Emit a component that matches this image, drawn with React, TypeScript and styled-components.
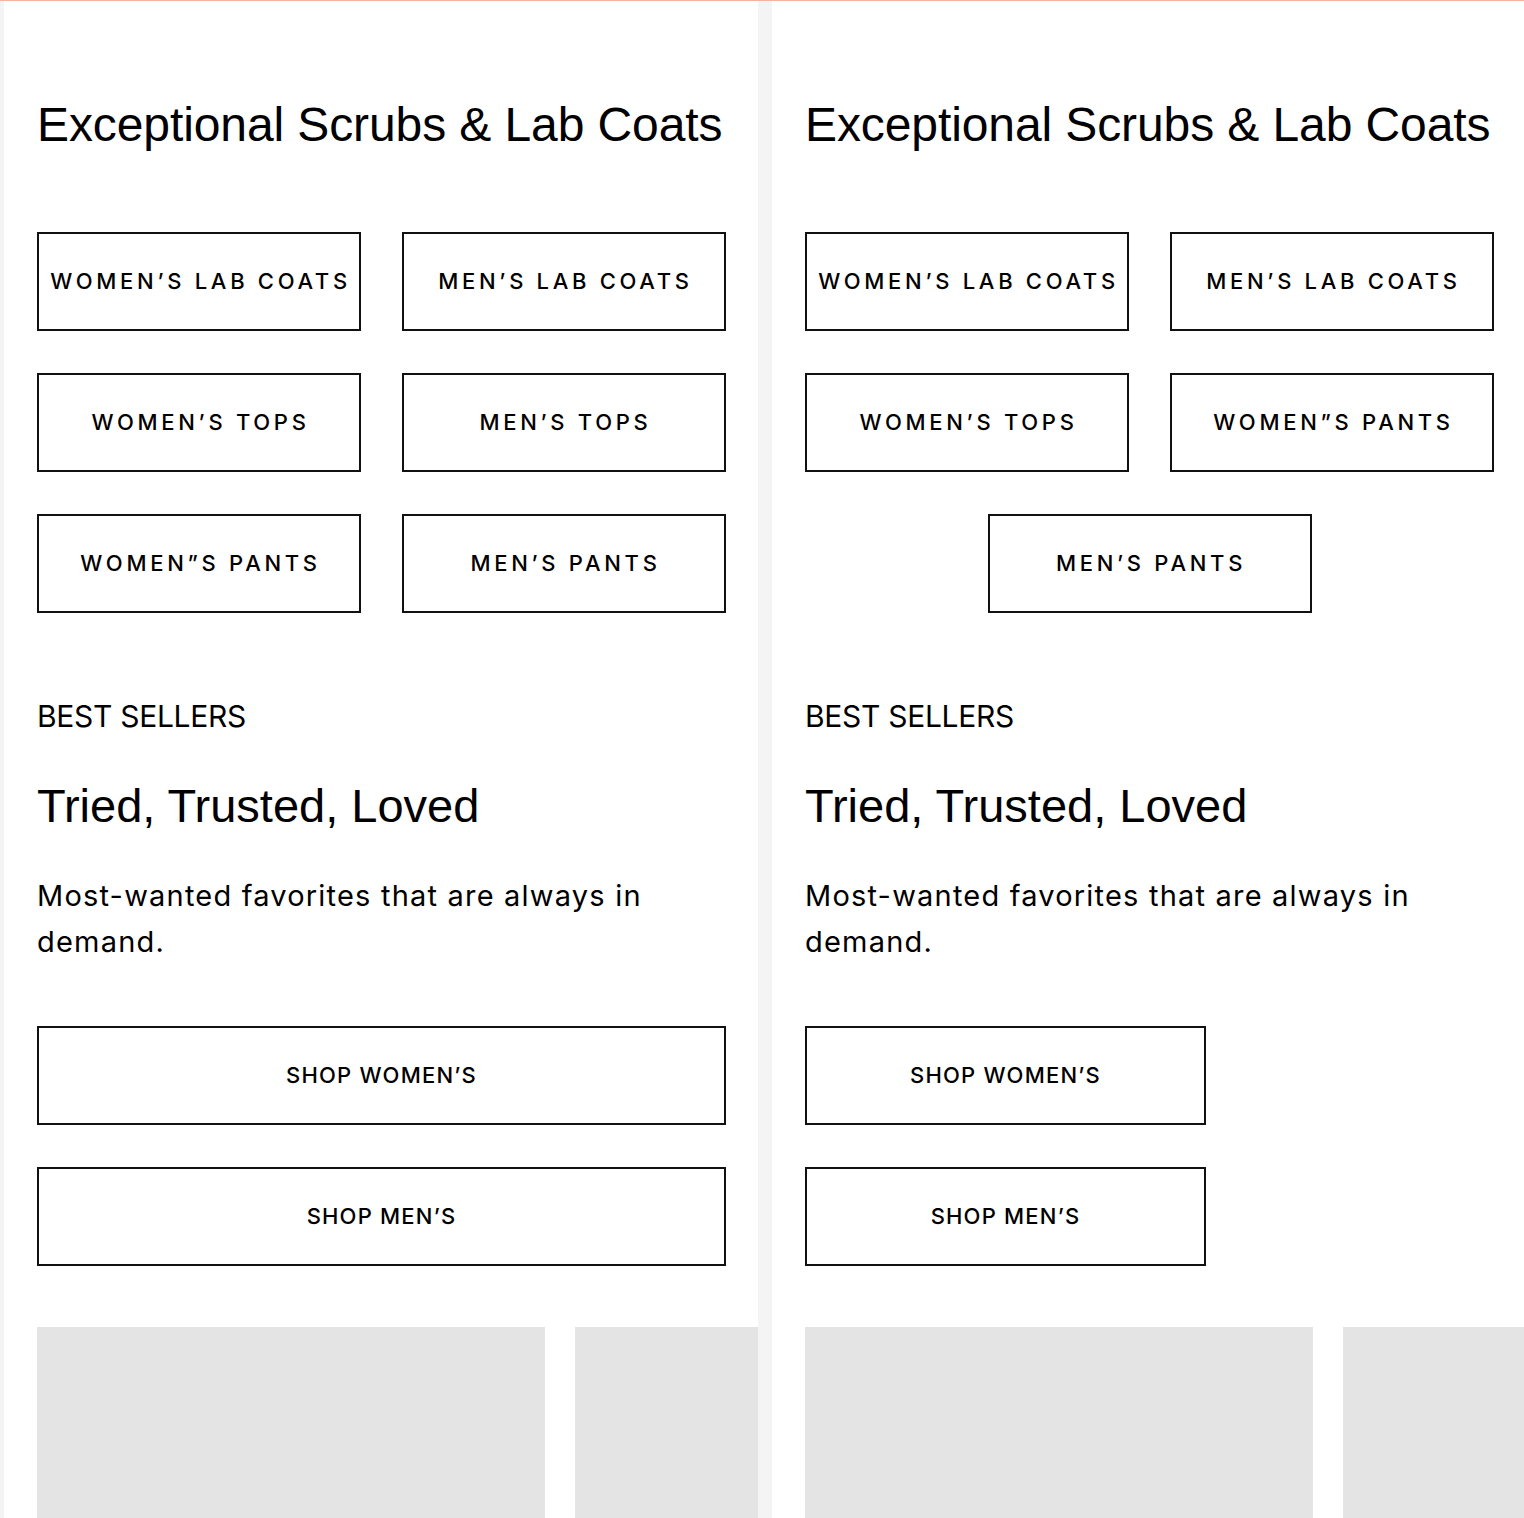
import React from "react";
import styled, { createGlobalStyle } from "styled-components";

const GlobalStyle = createGlobalStyle`
  html, body {
    margin: 0;
    padding: 0;
    background: #f4f4f4;
  }
  body {
    border-top: 1px solid #f1b4a0;
    overflow: hidden;
    font-family: "Inter", "Liberation Sans", sans-serif;
    color: #000;
  }
  * {
    box-sizing: border-box;
  }
`;

const categories = [
  ["WOMEN’S LAB COATS", "MEN’S LAB COATS", "WOMEN’S TOPS", "MEN’S TOPS", "WOMEN”S PANTS", "MEN’S PANTS"],
  ["WOMEN’S LAB COATS", "MEN’S LAB COATS", "WOMEN’S TOPS", "WOMEN”S PANTS", "MEN’S PANTS"],
];

function Section({ variant, links }: { variant: "mobile" | "tablet"; links: string[] }) {
  const narrow = variant === "tablet";
  return (
    <Panel>
      <Heading>Exceptional Scrubs &amp; Lab Coats</Heading>
      <CategoryGrid>
        {links.map((label, i) => (
          <CategoryButton key={i}>{label}</CategoryButton>
        ))}
      </CategoryGrid>

      <Eyebrow>BEST SELLERS</Eyebrow>
      <Title>Tried, Trusted, Loved</Title>
      <Lead>Most-wanted favorites that are always in demand.</Lead>

      <ShopList>
        <ShopButton $narrow={narrow}>SHOP WOMEN’S</ShopButton>
        <ShopButton $narrow={narrow}>SHOP MEN’S</ShopButton>
      </ShopList>

      <CardRow>
        <Card />
        <Card />
        <Card />
      </CardRow>
    </Panel>
  );
}

export default function App() {
  return (
    <>
      <GlobalStyle />
      <Page>
        <Section variant="mobile" links={categories[0]} />
        <Section variant="tablet" links={categories[1]} />
      </Page>
    </>
  );
}

const Page = styled.div`
  display: flex;
  gap: 14px;
  padding-left: 4px;
  height: 1517px;
  width: 1524px;
  overflow: hidden;
`;

const Panel = styled.section`
  flex: 0 0 754px;
  background: #fff;
  padding: 100px 33px 0;
  overflow: hidden;
`;

const Heading = styled.h2`
  margin: 0;
  font-family: "Liberation Sans", Arial, sans-serif;
  font-weight: 400;
  font-size: 48px;
  line-height: 48px;
  letter-spacing: -0.1px;
  white-space: nowrap;
`;

const CategoryGrid = styled.div`
  display: flex;
  flex-wrap: wrap;
  justify-content: center;
  gap: 42px 41px;
  margin-top: 83px;
  width: 689px;
`;

const CategoryButton = styled.a`
  flex: 0 0 324px;
  height: 99px;
  display: flex;
  align-items: center;
  justify-content: center;
  border: 2px solid #111;
  font-family: "Inter", sans-serif;
  font-weight: 500;
  font-size: 22px;
  letter-spacing: 3.7px;
  padding: 0 0 2px 3px;
  white-space: nowrap;
  color: #000;
`;

const Eyebrow = styled.div`
  margin-top: 85px;
  font-family: "Inter", sans-serif;
  font-weight: 400;
  font-size: 30px;
  line-height: 36px;
  letter-spacing: -0.3px;
`;

const Title = styled.h3`
  margin: 48px 0 0;
  font-family: "Liberation Sans", Arial, sans-serif;
  font-weight: 400;
  font-size: 47px;
  line-height: 47px;
`;

const Lead = styled.p`
  margin: 44px 0 0;
  font-family: "Inter", sans-serif;
  font-size: 29px;
  line-height: 46px;
  letter-spacing: 1.2px;
  width: 688px;
`;

const ShopList = styled.div`
  display: flex;
  flex-direction: column;
  gap: 42px;
  margin-top: 61px;
`;

const ShopButton = styled.a<{ $narrow?: boolean }>`
  width: ${({ $narrow }) => ($narrow ? "401px" : "689px")};
  height: 99px;
  display: flex;
  align-items: center;
  justify-content: center;
  border: 2px solid #111;
  font-family: "Inter", sans-serif;
  font-weight: 500;
  font-size: 22px;
  letter-spacing: 1.2px;
  padding-bottom: 2px;
  color: #000;
`;

const CardRow = styled.div`
  display: flex;
  gap: 30px;
  margin-top: 61px;
`;

const Card = styled.div`
  flex: 0 0 508px;
  height: 508px;
  background: #e4e4e4;
`;
